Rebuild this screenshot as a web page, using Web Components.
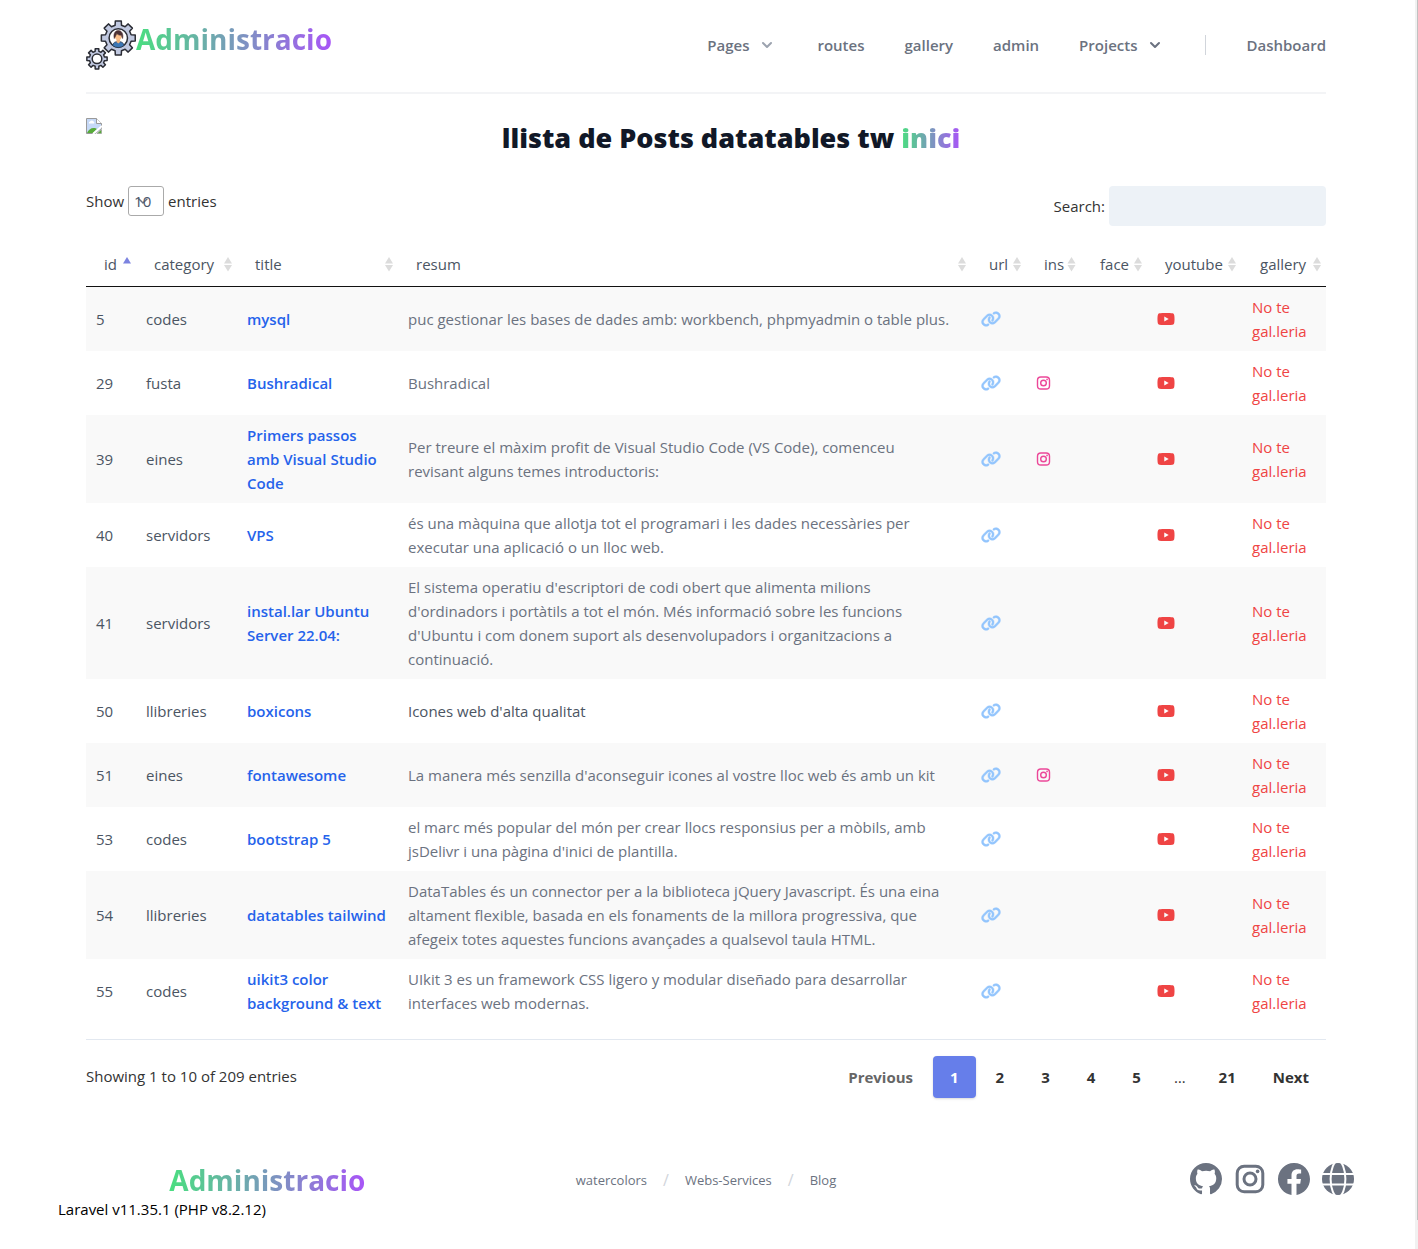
<!DOCTYPE html>
<html lang="ca">
<head>
<meta charset="utf-8">
<meta name="viewport" content="width=device-width, initial-scale=1">
<title>Administracio</title>
<style>
  body { margin: 0; background: #fff; color: #333; font: 15px/24px "Open Sans", "Noto Sans", sans-serif; }
</style>
</head>
<body>
<admin-page>
  <site-header slot="header"></site-header>
  <page-title slot="main">llista de Posts datatables tw <gradient-text>inici</gradient-text></page-title>
  <posts-table slot="main"></posts-table>
  <site-footer slot="footer">Laravel v11.35.1 (PHP v8.2.12)</site-footer>
</admin-page>

<script>
const base = `<style>
  *, *::before, *::after { box-sizing: border-box; }
  a { color: inherit; text-decoration: none; }
  button { font: inherit; color: inherit; background: none; border: 0; margin: 0; padding: 0; cursor: pointer; }
  ul { list-style: none; margin: 0; padding: 0; }
</style>`;

function define(name, html, setup) {
  const template = document.createElement('template');
  template.innerHTML = base + html;
  customElements.define(name, class extends HTMLElement {
    connectedCallback() {
      if (this.shadowRoot) return;
      this.attachShadow({ mode: 'open' }).append(template.content.cloneNode(true));
      if (setup) setup(this, this.shadowRoot);
    }
  });
}

/* Eight-toothed gear: alternating radii round a centre. */
function gear(cx, cy, outer, inner) {
  const points = [];
  for (let i = 0; i < 8; i++) {
    for (const [offset, r] of [[-14, inner], [-10, outer], [10, outer], [14, inner]]) {
      const a = (i * 45 + offset) * Math.PI / 180;
      points.push((cx + r * Math.sin(a)).toFixed(2) + ' ' + (cy - r * Math.cos(a)).toFixed(2));
    }
  }
  return 'M' + points.join('L') + 'Z';
}

const icons = {
  link: ['0 0 640 512', '<path d="M579.8 267.7c56.5-56.5 56.5-148 0-204.5c-50-50-128.8-56.5-186.3-15.4l-1.6 1.1c-14.4 10.3-17.7 30.3-7.4 44.6s30.3 17.7 44.6 7.4l1.6-1.1c32.1-22.9 76-19.3 103.8 8.6c31.5 31.5 31.5 82.5 0 114L422.3 334.8c-31.5 31.5-82.5 31.5-114 0c-27.9-27.9-31.5-71.8-8.6-103.8l1.1-1.6c10.3-14.4 6.9-34.4-7.4-44.6s-34.4-6.9-44.6 7.4l-1.1 1.6C206.5 251.2 213 330 263 380c56.5 56.5 148 56.5 204.5 0L579.8 267.7zM60.2 244.3c-56.5 56.5-56.5 148 0 204.5c50 50 128.8 56.5 186.3 15.4l1.6-1.1c14.4-10.3 17.7-30.3 7.4-44.6s-30.3-17.7-44.6-7.4l-1.6 1.1c-32.1 22.9-76 19.3-103.8-8.6C74 372 74 321 105.5 289.5L217.7 177.2c31.5-31.5 82.5-31.5 114 0c27.9 27.9 31.5 71.8 8.6 103.9l-1.1 1.6c-10.3 14.4-6.9 34.4 7.4 44.6s34.4 6.9 44.6-7.4l1.1-1.6C433.5 260.8 427 182 377 132c-56.5-56.5-148-56.5-204.5 0L60.2 244.3z" stroke="currentColor" stroke-width="14"/>'],
  youtube: ['0 0 576 512', '<path d="M549.655 124.083c-6.281-23.65-24.787-42.276-48.284-48.597C458.781 64 288 64 288 64S117.22 64 74.629 75.486c-23.497 6.322-42.003 24.947-48.284 48.597-11.412 42.867-11.412 132.305-11.412 132.305s0 89.438 11.412 132.305c6.281 23.65 24.787 41.5 48.284 47.821C117.22 448 288 448 288 448s170.78 0 213.371-11.486c23.497-6.321 42.003-24.171 48.284-47.821 11.412-42.867 11.412-132.305 11.412-132.305s0-89.438-11.412-132.305zm-317.51 213.508V175.185l142.739 81.205-142.739 81.201z"/>'],
  instagram: ['0 0 32 32', '<g fill="none" stroke="currentColor" stroke-width="3"><rect x="3.2" y="3.2" width="25.6" height="25.6" rx="7"/><circle cx="16" cy="16" r="6"/></g><circle cx="23.6" cy="8.4" r="1.8"/>'],
  github: ['0 0 16 16', '<path d="M8 0C3.58 0 0 3.58 0 8c0 3.54 2.29 6.53 5.47 7.59.4.07.55-.17.55-.38 0-.19-.01-.82-.01-1.49-2.01.37-2.53-.49-2.69-.94-.09-.23-.48-.94-.82-1.13-.28-.15-.68-.52-.01-.53.63-.01 1.08.58 1.23.82.72 1.21 1.87.87 2.33.66.07-.52.28-.87.51-1.07-1.78-.2-3.64-.89-3.64-3.95 0-.87.31-1.59.82-2.15-.08-.2-.36-1.02.08-2.12 0 0 .67-.21 2.2.82.64-.18 1.32-.27 2-.27s1.36.09 2 .27c1.53-1.04 2.2-.82 2.2-.82.44 1.1.16 1.92.08 2.12.51.56.82 1.27.82 2.15 0 3.07-1.87 3.75-3.65 3.95.29.25.54.73.54 1.48 0 1.07-.01 1.93-.01 2.2 0 .21.15.46.55.38A8.01 8.01 0 0 0 16 8c0-4.42-3.58-8-8-8z"/>'],
  facebook: ['0 0 16 16', '<path d="M16 8.049c0-4.446-3.582-8.05-8-8.05C3.58 0-.002 3.603-.002 8.05c0 4.017 2.926 7.347 6.75 7.951v-5.625h-2.03V8.05H6.75V6.275c0-2.017 1.195-3.131 3.022-3.131.876 0 1.791.157 1.791.157v1.98h-1.009c-.993 0-1.303.621-1.303 1.258v1.51h2.218l-.354 2.326H9.25V16c3.824-.604 6.75-3.934 6.75-7.951z"/>'],
  globe: ['0 0 32 32', '<circle cx="16" cy="16" r="16"/><g fill="none" stroke="#fff" stroke-width="2"><path d="M0 11h32M0 21.5h32"/><ellipse cx="16" cy="16" rx="7.4" ry="18"/></g>'],
  chevron: ['0 0 20 20', '<path fill-rule="evenodd" d="M5.293 7.293a1 1 0 011.414 0L10 10.586l3.293-3.293a1 1 0 111.414 1.414l-4 4a1 1 0 01-1.414 0l-4-4a1 1 0 010-1.414z"/>'],
  sort: ['0 0 8 16', '<path d="M4 1l4 6.500H0zM4 15.500l4-6.500H0z"/>'],
  sortup: ['0 0 8 16', '<path d="M4 1l4 6.500H0z"/>'],
  broken: ['0 0 16 16', '<path d="M.5.5h10l5 5v5l-6 5h-9z" fill="#c6d9f7" stroke="#9a9a9a"/><path d="M10.500.5v5h5" fill="#fff" stroke="#9a9a9a"/><path d="M3 5.500a1.500 1.500 0 011-2 2 2 0 013.500 0 1.200 1.200 0 01.500 2z" fill="#fff"/><path d="M1 15c1-3 4-5 6.500-5 1.500 0 3 .5 3.500 1L7 15z" fill="#58ab3a"/><path d="M7 16l9-8" stroke="#fff" stroke-width="2"/><path d="M11 15.500l4.500-4v4z" fill="#58ab3a" stroke="#9a9a9a" stroke-width=".6"/>'],
  logo: ['0 0 50 50', `<g stroke="#2b2d35" stroke-width="1.500" stroke-linejoin="round"><path fill="#c0c8e0" d="${gear(32.3, 18, 17.200, 13.200)}"/><circle cx="32.300" cy="18" r="9.200" fill="#fff"/><path fill="#c0c8e0" d="${gear(11, 38.8, 10.300, 7.700)}"/><circle cx="11" cy="38.800" r="4.800" fill="#fff"/></g><path d="M26.500 25.500c.5-3 3-4 5.800-4s5.300 1 5.800 4a9 9 0 01-11.600 0z" fill="#3c77b5" stroke="#26364d" stroke-width=".8"/><path d="M30.500 19h3.600v3l-1.800 1.500-1.800-1.500z" fill="#f0b27c"/><circle cx="32.300" cy="16.500" r="3.400" fill="#fbc08b"/><path d="M28.300 18.500c-1.200-5 1-8 4-8s5.400 3 4.300 8l-1.400-3.400c-2 .3-3.600-.5-4.400-1.500z" fill="#4b3034" stroke="#4b3034" stroke-width=".6"/>`]
};

define('app-icon', `<style>
  :host { display: inline-flex; flex: none; width: 20px; height: 20px; }
  svg { display: block; width: 100%; height: 100%; fill: currentColor; }
</style><svg aria-hidden="true"></svg>`, (host, root) => {
  const [box, shapes] = icons[host.getAttribute('name')];
  const svg = root.querySelector('svg');
  svg.setAttribute('viewBox', box);
  svg.innerHTML = shapes;
});

define('gradient-text', `<style>
  :host { display: inline-block; background: linear-gradient(to right, #4ade80, #a855f7); -webkit-background-clip: text; background-clip: text; color: transparent; }
</style><slot></slot>`);

define('site-header', `<style>
  :host { display: flex; justify-content: space-between; padding: 20px 0 22px; border-bottom: 2px solid #f3f4f6; }
  .brand { display: flex; font-size: 28px; line-height: 38px; font-weight: 700; }
  .brand app-icon { width: 50px; height: 50px; }
  nav, ul { display: flex; align-items: center; gap: 40px; }
  nav { font-weight: 600; color: #6b7280; }
  button { display: flex; align-items: center; gap: 8px; }
  .soft app-icon { color: #9ca3af; }
  .rule { width: 1px; height: 20px; background: #d1d5db; }
</style>
<a class="brand" href="#"><app-icon name="logo"></app-icon><gradient-text>Administracio</gradient-text></a>
<nav aria-label="Principal">
  <ul>
    <li><button class="soft" type="button">Pages<app-icon name="chevron"></app-icon></button></li>
    <li><a href="#">routes</a></li>
    <li><a href="#">gallery</a></li>
    <li><a href="#">admin</a></li>
    <li><button type="button">Projects<app-icon name="chevron"></app-icon></button></li>
  </ul>
  <span class="rule"></span>
  <a href="#">Dashboard</a>
</nav>`);

define('page-title', `<style>
  :host { display: flex; align-items: flex-start; }
  .picture { display: flex; width: 50px; }
  .picture app-icon { width: 16px; height: 16px; }
  h1 { flex: 1; margin: 0; text-align: center; font-size: 27px; line-height: 40px; font-weight: 800; color: #111827; }
</style>
<div class="picture"><app-icon name="broken"></app-icon></div>
<h1><slot></slot></h1>`);

const posts = [
  [5, 'codes', 'mysql', 'puc gestionar les bases de dades amb: workbench, phpmyadmin o table plus.'],
  [29, 'fusta', 'Bushradical', 'Bushradical', 'ins'],
  [39, 'eines', 'Primers passos amb Visual Studio Code', 'Per treure el màxim profit de Visual Studio Code (VS Code), comenceu revisant alguns temes introductoris:', 'ins'],
  [40, 'servidors', 'VPS', 'és una màquina que allotja tot el programari i les dades necessàries per executar una aplicació o un lloc web.'],
  [41, 'servidors', 'instal.lar Ubuntu Server 22.04:', "El sistema operatiu d'escriptori de codi obert que alimenta milions d'ordinadors i portàtils a tot el món. Més informació sobre les funcions d'Ubuntu i com donem suport als desenvolupadors i organitzacions a continuació."],
  [50, 'llibreries', 'boxicons', "Icones web d'alta qualitat", 'dark'],
  [51, 'eines', 'fontawesome', "La manera més senzilla d'aconseguir icones al vostre lloc web és amb un kit", 'ins'],
  [53, 'codes', 'bootstrap 5', "el marc més popular del món per crear llocs responsius per a mòbils, amb jsDelivr i una pàgina d'inici de plantilla."],
  [54, 'llibreries', 'datatables tailwind', 'DataTables és un connector per a la biblioteca jQuery Javascript. És una eina altament flexible, basada en els fonaments de la millora progressiva, que afegeix totes aquestes funcions avançades a qualsevol taula HTML.'],
  [55, 'codes', 'uikit3 color background &amp; text', 'UIkit 3 es un framework CSS ligero y modular diseñado para desarrollar interfaces web modernas.']
];
const columns = ['id', 'category', 'title', 'resum', 'url', 'ins', 'face', 'youtube', 'gallery'];

define('table-controls', `<style>
  :host { display: flex; justify-content: space-between; align-items: flex-start; }
  label { display: flex; align-items: center; gap: 4px; }
  select { appearance: none; width: 36px; height: 30px; margin: 0; padding: 0 5px; border: 1px solid #aaa; border-radius: 3px; color: #4a5568; font: inherit;
    background: #fff url("data:image/svg+xml,%3Csvg xmlns='http://www.w3.org/2000/svg' viewBox='0 0 20 20'%3E%3Cpath fill='none' stroke='%236b7280' stroke-width='1.500' stroke-linecap='round' d='M6 8l4 4 4-4'/%3E%3C/svg%3E") 4px center / 20px no-repeat; }
  input { width: 217px; height: 40px; margin: 0; padding: 8px 16px; border: 0; border-radius: 4px; background: #edf2f7; color: #4a5568; font: inherit; }
</style>
<label>Show <select><option>10</option><option>25</option><option>50</option><option>100</option></select> entries</label>
<label>Search:<input type="search"></label>`);

define('table-pager', `<style>
  :host { display: flex; justify-content: space-between; align-items: flex-start; padding-top: 16px; }
  p { margin: 0; line-height: 40px; }
  nav { display: flex; gap: 3px; font-weight: 700; }
  button { height: 42px; padding: 0 17px; border-radius: 4px; }
  button:disabled { color: #666; }
  .current { background: #667eea; color: #fff; box-shadow: 0 1px 3px rgba(0,0,0,.1), 0 1px 2px rgba(0,0,0,.06); }
  span { padding: 0 13px; line-height: 42px; font-weight: 400; }
</style>
<p>Showing 1 to 10 of 209 entries</p>
<nav aria-label="Pagines">
  <button type="button" disabled>Previous</button><button class="current" type="button">1</button><button type="button">2</button><button type="button">3</button><button type="button">4</button><button type="button">5</button><span>…</span><button type="button">21</button><button type="button">Next</button>
</nav>`);

define('posts-table', `<style>
  :host { display: block; }
  table { width: 100%; margin-top: 18px; table-layout: fixed; border-collapse: separate; border-spacing: 0; color: #4b5563; }
  th { height: 43px; padding: 0 0 2px; border-bottom: 1px solid #111; font-weight: 400; }
  th button { display: flex; align-items: center; justify-content: space-between; width: 100%; padding: 0 5px 0 18px; }
  th app-icon { width: 8px; height: 16px; color: #dcdcdc; }
  th[aria-sort] app-icon { color: #7c83e0; }
  td { padding: 8px 10px; vertical-align: middle; }
  tbody tr:nth-child(odd) { background: #f9f9f9; }
  .id { width: 50px; } .category { width: 101px; } .title { width: 161px; } .url { width: 55px; } .ins { width: 56px; }
  .face { width: 65px; } .youtube { width: 95px; } .gallery { width: 84px; }
  td.title { font-weight: 600; color: #2563eb; }
  td.resum { padding-right: 18px; color: #6b7280; }
  td.dark { color: #4b5563; }
  td.url { color: #93c5fd; } td.ins { color: #ec4899; }
  td.youtube, td.gallery { color: #ef4444; }
  td app-icon { display: flex; height: 16px; }
  .youtube app-icon { width: 18px; } .ins app-icon { width: 15px; }
  .end { height: 17px; border-bottom: 1px solid #e2e8f0; }
</style>
<table-controls></table-controls>
<table><thead><tr></tr></thead><tbody></tbody></table>
<div class="end"></div>
<table-pager></table-pager>`, (host, root) => {
  root.querySelector('thead tr').innerHTML = columns.map((name, i) =>
    `<th class="${name}"${i ? '' : ' aria-sort="ascending"'}><button type="button">${name}<app-icon name="${i ? 'sort' : 'sortup'}"></app-icon></button></th>`).join('');
  root.querySelector('tbody').innerHTML = posts.map(([id, category, title, resum, flag]) => `<tr>
    <td>${id}</td><td>${category}</td><td class="title"><a href="#">${title}</a></td>
    <td class="resum ${flag === 'dark' ? 'dark' : ''}">${resum}</td>
    <td class="url"><a href="#" aria-label="url"><app-icon name="link"></app-icon></a></td>
    <td class="ins">${flag === 'ins' ? '<a href="#" aria-label="instagram"><app-icon name="instagram"></app-icon></a>' : ''}</td>
    <td></td>
    <td class="youtube"><a href="#" aria-label="youtube"><app-icon name="youtube"></app-icon></a></td>
    <td class="gallery">No te gal.leria</td></tr>`).join('');
});

define('site-footer', `<style>
  :host { display: block; color: #000; }
  .row { display: grid; grid-template-columns: 1fr 1fr 1fr; gap: 20px; align-items: center; color: #6b7280; }
  .brand { justify-self: center; font-size: 28px; line-height: 34px; font-weight: 700; }
  ul { display: flex; justify-content: center; gap: 16px; font-size: 13px; line-height: 20px; }
  li { display: flex; gap: 16px; }
  li + li::before { content: "/"; font-size: 16px; color: #d1d5db; }
  .social { display: flex; align-self: start; justify-content: flex-end; gap: 12px; }
  .social app-icon { display: flex; width: 32px; height: 32px; }
</style>
<div class="row">
  <a class="brand" href="#"><gradient-text>Administracio</gradient-text></a>
  <ul><li><a href="#">watercolors</a></li><li><a href="#">Webs-Services</a></li><li><a href="#">Blog</a></li></ul>
  <div class="social">
    <a href="#" aria-label="GitHub"><app-icon name="github"></app-icon></a>
    <a href="#" aria-label="Instagram"><app-icon name="instagram"></app-icon></a>
    <a href="#" aria-label="Facebook"><app-icon name="facebook"></app-icon></a>
    <a href="#" aria-label="Web"><app-icon name="globe"></app-icon></a>
  </div>
</div>
<slot></slot>`);

define('admin-page', `<style>
  :host { display: flex; min-height: 100vh; }
  .page { flex: 1; min-width: 0; padding: 0 61px 0 58px; }
  .content { padding: 0 28px; }
  main { display: flex; flex-direction: column; gap: 28px; padding: 24px 0 65px; }
  .track { width: 3px; padding-left: 2px; background: #f1f1f1; }
  .thumb { height: calc(100vh - 29px); background: #c1c1c1; }
</style>
<div class="page">
  <div class="content">
    <slot name="header"></slot>
    <main><slot name="main"></slot></main>
  </div>
  <slot name="footer"></slot>
</div>
<div class="track"><div class="thumb"></div></div>`);
</script>
</body>
</html>
